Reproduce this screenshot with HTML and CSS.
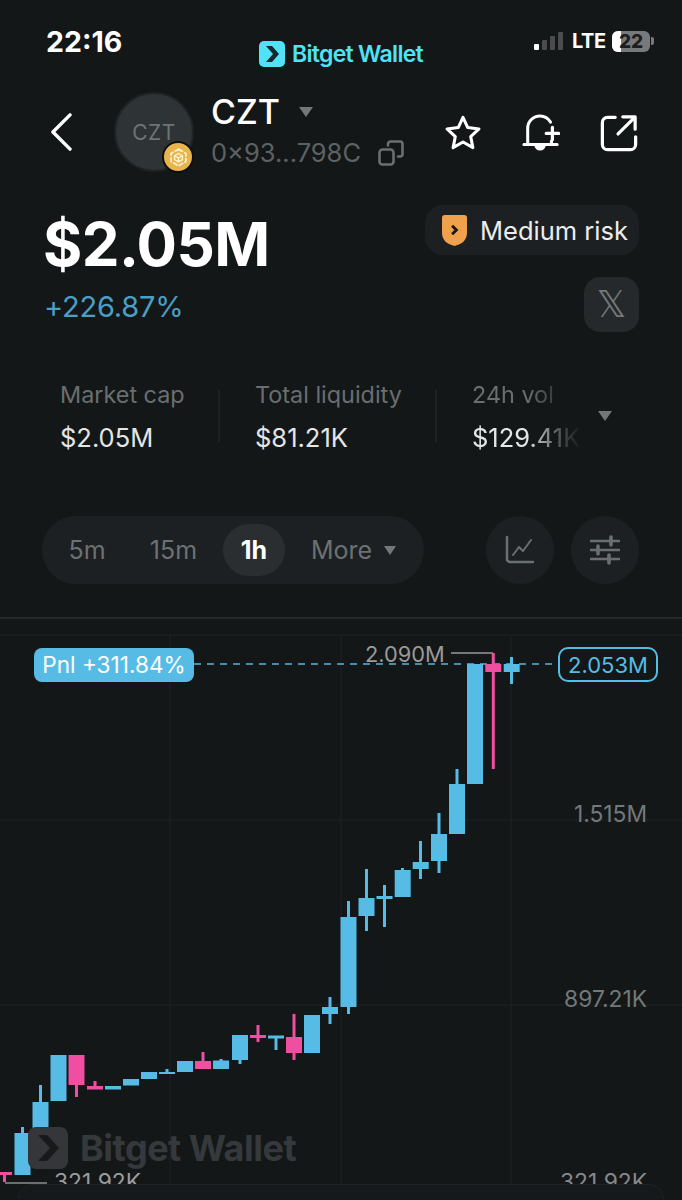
FILE: index.html
```html
<!DOCTYPE html>
<html lang="en">
<head>
<meta charset="utf-8">
<title>CZT</title>
<link rel="stylesheet" href="styles.css">
</head>
<body>
<div class="screen">
  <header class="status">
    <span class="clock">22:16</span>
    <div class="brand">
      <svg class="brand-mark" viewBox="0 0 26 26"><rect width="26" height="26" rx="5" fill="#4fe3f5"/><path d="M7 5h6l7 8-7 8H7l7-8z" fill="#12282c"/></svg>
      <span class="brand-name">Bitget Wallet</span>
    </div>
    <div class="status-right">
      <svg class="signal" viewBox="0 0 30 20"><rect x="0" y="13" width="5" height="6" rx="1" fill="#fff"/><rect x="8" y="9" width="5" height="10" rx="1" fill="#4a4c4d"/><rect x="16" y="5" width="5" height="14" rx="1" fill="#4a4c4d"/><rect x="24" y="1" width="5" height="18" rx="1" fill="#4a4c4d"/></svg>
      <span class="lte">LTE</span>
      <span class="battery"><span class="battery-level"></span><span class="battery-text">22</span></span>
      <span class="battery-tip"></span>
    </div>
  </header>

  <section class="token-row">
    <svg class="back" viewBox="0 0 24 40"><path d="M21 2 3 20l18 18" fill="none" stroke="#fff" stroke-width="3.600" stroke-linecap="round" stroke-linejoin="round"/></svg>
    <div class="avatar">
      <span>CZT</span>
      <span class="chain">
        <svg viewBox="0 0 24 24"><path d="M12 2.500 20.500 7.500v9L12 21.500 3.500 16.500v-9z" fill="none" stroke="#fff3d0" stroke-width="2" stroke-linejoin="round" stroke-dasharray="6 1.500"/><path d="M12 7.500l4.500 2.500v4.500L12 17l-4.500-2.500V10zM7.500 10l4.500 2.500 4.500-2.500M12 12.500V17" fill="none" stroke="#fff3d0" stroke-width="1.600" stroke-linejoin="round"/></svg>
      </span>
    </div>
    <div class="token-info">
      <div class="token-name">CZT<span class="caret caret-name"></span></div>
      <div class="token-address">0×93...798C
        <svg class="copy" viewBox="0 0 26 26"><rect x="1.500" y="9.500" width="14" height="15" rx="3" fill="none" stroke="#6a6f71" stroke-width="2.600"/><path d="M10 5.500V4a2.500 2.500 0 0 1 2.500-2.500h9.500A2.500 2.500 0 0 1 24.500 4v10a2.500 2.500 0 0 1-2.500 2.500h-2" fill="none" stroke="#6a6f71" stroke-width="2.600" stroke-linecap="round"/></svg>
      </div>
    </div>
    <div class="token-actions">
      <svg class="action" viewBox="0 0 40 40"><path d="M20 3.500l5 10.800 11.800 1.400-8.700 8 2.300 11.700L20 29.500 9.600 35.400l2.300-11.700-8.700-8L15 14.300z" fill="none" stroke="#fff" stroke-width="3.200" stroke-linejoin="round"/></svg>
      <svg class="action" viewBox="0 0 40 40"><path d="M6 32V15A13 13 0 0 1 19 2a13 13 0 0 1 11 6.500" fill="none" stroke="#fff" stroke-width="3.200" stroke-linecap="round"/><path d="M31 28.500V32M2 32h35" fill="none" stroke="#fff" stroke-width="3.200" stroke-linecap="round"/><path d="M13 33h12a6 5.500 0 0 1-12 0z" fill="#fff"/><path d="M32 14v13M25.500 20.500h13" fill="none" stroke="#fff" stroke-width="3.400" stroke-linecap="round"/></svg>
      <svg class="action" viewBox="0 0 40 40"><path d="M16 3.500H8A5.500 5.500 0 0 0 2.500 9v23A5.500 5.500 0 0 0 8 37.500h24a5.500 5.500 0 0 0 5.500-5.500v-8" fill="none" stroke="#fff" stroke-width="3.400" stroke-linecap="round"/><path d="M19 21 36 4M24 3h13v13" fill="none" stroke="#fff" stroke-width="3.400" stroke-linecap="round" stroke-linejoin="round"/></svg>
    </div>
  </section>

  <section class="price-block">
    <div class="price-main">
      <div class="price">$2.05M</div>
      <div class="change">+226.87%</div>
    </div>
    <div class="price-side">
      <div class="risk">
        <svg class="shield" viewBox="0 0 26 32"><path d="M3 0h20a3 3 0 0 1 3 3v15q0 11-13 14Q0 29 0 18V3a3 3 0 0 1 3-3z" fill="#f0a14b"/><path d="M10.500 11l4.500 4.500-4.500 4.500" fill="none" stroke="#17191a" stroke-width="3"/></svg>
        <span>Medium risk</span>
      </div>
      <div class="social"><span>𝕏</span></div>
    </div>
  </section>

  <section class="stats">
    <div class="stat stat-cap"><div class="stat-label">Market cap</div><div class="stat-value">$2.05M</div></div>
    <div class="stat-rule"></div>
    <div class="stat stat-liq"><div class="stat-label">Total liquidity</div><div class="stat-value">$81.21K</div></div>
    <div class="stat-rule"></div>
    <div class="stat stat-vol"><div class="stat-label">24h vol</div><div class="stat-value">$129.41K</div></div>
    <span class="caret caret-stats"></span>
  </section>

  <section class="controls">
    <div class="tabs">
      <span class="tab tab-5m">5m</span>
      <span class="tab tab-15m">15m</span>
      <span class="tab tab-active">1h</span>
      <span class="tab tab-more">More<span class="caret caret-more"></span></span>
    </div>
    <div class="tools">
      <button class="tool"><svg viewBox="0 0 30 30"><path d="M2 2v22a3 3 0 0 0 3 3h23" fill="none" stroke="#6a6f71" stroke-width="2.500" stroke-linecap="round"/><path d="M8 20l6-8 4 4 8-11" fill="none" stroke="#6a6f71" stroke-width="2" stroke-linecap="round" stroke-linejoin="round"/></svg></button>
      <button class="tool"><svg viewBox="0 0 30 30"><path d="M1 6h28M1 15h28M1 24h28" stroke="#6a6f71" stroke-width="2.600" stroke-linecap="round"/><path d="M21 2v8M8 11v8M19 20v8" stroke="#6a6f71" stroke-width="3.600" stroke-linecap="round"/></svg></button>
    </div>
  </section>

  <section class="chart">
    <svg class="plot" viewBox="0 619 682 566">
      <g class="grid">
        <path d="M170 635V1185M341 635V1185M511 635V1185M0 635H682M0 820H682M0 1005H682"/>
      </g>
      <path class="price-line" d="M194 664H560"/>
      <path class="high-line" d="M451 653H493"/>
      <path class="low-line" d="M5 1183H47"/>
      <g class="up">
        <rect x="21" y="1127" width="3" height="48"/><rect x="14.500" y="1133" width="16" height="42"/>
        <rect x="39" y="1085" width="3" height="48"/><rect x="32.500" y="1102" width="16" height="31"/>
        <rect x="50.500" y="1055" width="16" height="46"/>
        <rect x="105" y="1086" width="16" height="3.500"/>
        <rect x="123" y="1079" width="16" height="6.500"/>
        <rect x="141" y="1072" width="16" height="7"/>
        <rect x="165.500" y="1069" width="3" height="5"/><rect x="159" y="1072" width="16" height="2"/>
        <rect x="177" y="1061" width="16" height="11"/>
        <rect x="219.500" y="1059" width="3" height="10"/><rect x="213" y="1060.500" width="16" height="8.500"/>
        <rect x="238.500" y="1035" width="3" height="29"/><rect x="232" y="1035" width="16" height="25"/>
        <rect x="274.500" y="1036" width="3" height="14"/><rect x="268" y="1035.500" width="16" height="3"/>
        <rect x="304" y="1015" width="16" height="38"/>
        <rect x="328.500" y="997" width="3" height="27"/><rect x="322" y="1007" width="16" height="7"/>
        <rect x="347" y="901" width="3" height="113"/><rect x="340.500" y="917" width="16" height="90"/>
        <rect x="365" y="869" width="3" height="62"/><rect x="358.500" y="898" width="16" height="18"/>
        <rect x="383" y="885" width="3" height="42"/><rect x="376.500" y="896" width="16" height="3"/>
        <rect x="401" y="868" width="3" height="29"/><rect x="394.700" y="870" width="16" height="27"/>
        <rect x="419" y="841" width="3" height="38"/><rect x="412.700" y="862" width="16" height="7"/>
        <rect x="437.500" y="813" width="3" height="60"/><rect x="431" y="834" width="16" height="27"/>
        <rect x="455.500" y="769" width="3" height="65"/><rect x="449" y="784" width="16" height="50"/>
        <rect x="467" y="664" width="16" height="120"/>
        <rect x="510" y="657" width="3" height="27"/><rect x="503.700" y="664" width="16" height="8"/>
      </g>
      <g class="down">
        <rect x="3" y="1172" width="3" height="10"/><rect x="-4" y="1172" width="16" height="3"/>
        <rect x="75" y="1055" width="3" height="42"/><rect x="68.500" y="1055" width="16" height="30"/>
        <rect x="93.500" y="1081" width="3" height="8"/><rect x="87" y="1086" width="16" height="3.500"/>
        <rect x="201.500" y="1052" width="3" height="17"/><rect x="195" y="1061" width="16" height="8"/>
        <rect x="256.500" y="1025" width="3" height="17"/><rect x="250" y="1035" width="16" height="3"/>
        <rect x="292.500" y="1014" width="3" height="46"/><rect x="286" y="1037" width="16" height="16"/>
        <rect x="491.800" y="653" width="3" height="116"/><rect x="485.300" y="664" width="16" height="8"/>
      </g>
    </svg>

    <div class="watermark">
      <svg class="watermark-mark" viewBox="0 0 40 42"><rect width="40" height="42" rx="8" fill="#343639"/><path d="M10 8h9l12 13-12 13h-9l12-13z" fill="#17191b"/></svg>
      <span>Bitget Wallet</span>
    </div>

    <span class="pnl">Pnl +311.84%</span>
    <span class="last-price">2.053M</span>
    <span class="axis axis-high">2.090M</span>
    <span class="axis axis-1515">1.515M</span>
    <span class="axis axis-897">897.21K</span>
    <span class="axis axis-321r">321.92K</span>
    <span class="axis axis-321l">321.92K</span>
  </section>

  <div class="sheet"></div>
</div>
</body>
</html>
```

FILE: styles.css
```css
* { box-sizing: border-box; }

html, body {
  margin: 0;
  padding: 0;
  background: #141718;
}

.screen {
  width: 682px;
  height: 1200px;
  overflow: hidden;
  font-family: Inter, "Liberation Sans", sans-serif;
  color: #fff;
  background: #141718;
}

/* status bar */
.status {
  position: relative;
  height: 92px;
  padding: 26px 28px 0 46px;
  display: flex;
  justify-content: space-between;
  align-items: flex-start;
}
.clock {
  font-size: 28.500px;
  line-height: 31px;
  font-weight: 700;
}
.brand {
  position: absolute;
  left: 259px;
  top: 41px;
  display: flex;
  align-items: center;
  gap: 7px;
}
.brand-mark { width: 26px; height: 26px; }
.brand-name {
  font-size: 23px;
  line-height: 26px;
  font-weight: 600;
  letter-spacing: -0.7px;
  color: #4fe3f5;
}
.status-right {
  display: flex;
  align-items: center;
  margin-top: 4px;
  height: 22px;
}
.signal { width: 30px; height: 20px; margin-right: 8px; }
.lte {
  font-size: 20px;
  font-weight: 700;
  width: 40px;
  letter-spacing: -0.4px;
}
.battery {
  position: relative;
  width: 38px;
  height: 21px;
  border-radius: 6px;
  background: #77797a;
  overflow: hidden;
  display: block;
}
.battery-level {
  position: absolute;
  left: 0;
  top: 0;
  bottom: 0;
  width: 9px;
  background: #fff;
}
.battery-text {
  position: absolute;
  inset: 0;
  text-align: center;
  font-size: 19px;
  line-height: 21px;
  font-weight: 800;
  color: #1c1d1e;
}
.battery-tip {
  width: 3px;
  height: 8px;
  margin-left: 1px;
  border-radius: 0 2px 2px 0;
  background: #77797a;
}

/* token header */
.token-row {
  height: 80px;
  padding-left: 50px;
  display: flex;
  align-items: center;
}
.back { width: 23px; height: 38px; margin-right: 41px; }
.avatar {
  position: relative;
  width: 80px;
  height: 80px;
  margin-right: 17px;
  border-radius: 50%;
  background: #2e3335;
  border: 2px solid #1f2325;
  color: #6f7476;
  font-size: 21px;
  letter-spacing: 0.5px;
  display: flex;
  align-items: center;
  justify-content: center;
}
.chain {
  position: absolute;
  right: -2px;
  bottom: -3px;
  width: 32px;
  height: 32px;
  border-radius: 50%;
  background: #e9b44c;
  border: 2px solid #0d0e0f;
  display: flex;
  align-items: center;
  justify-content: center;
}
.chain svg { width: 21px; height: 21px; }
.token-info { width: 207px; margin-top: -1px; }
.token-name {
  display: flex;
  align-items: center;
  margin-top: -3px;
  font-size: 34px;
  line-height: 40px;
  font-weight: 500;
}
.token-address {
  display: flex;
  align-items: center;
  margin-top: 6px;
  font-size: 25.500px;
  line-height: 30px;
  color: #5d6264;
  white-space: nowrap;
}
.copy { width: 26px; height: 26px; margin-left: 17px; }
.caret {
  display: inline-block;
  width: 0;
  height: 0;
  border-left: 7px solid transparent;
  border-right: 7px solid transparent;
  border-top: 10px solid #72777a;
}
.caret-name { margin: 0 0 0 19px; }
.token-actions {
  display: flex;
  align-items: center;
  gap: 40px;
  margin-left: 26px;
  margin-top: 2px;
}
.action { width: 38px; height: 38px; }

/* price block */
.price-block {
  height: 195px;
  padding: 33px 43px 0 43px;
  display: flex;
  justify-content: space-between;
  align-items: flex-start;
}
.price {
  margin-top: 7px;
  font-size: 60px;
  line-height: 64px;
  font-weight: 700;
  letter-spacing: -0.6px;
}
.change {
  margin-top: 15px;
  margin-left: 1px;
  font-size: 29px;
  line-height: 32px;
  color: #4a9fc6;
  letter-spacing: -0.2px;
}
.price-side {
  display: flex;
  flex-direction: column;
  align-items: flex-end;
  gap: 22px;
}
.risk {
  width: 214px;
  height: 50px;
  padding-left: 17px;
  display: flex;
  align-items: center;
  gap: 13px;
  border-radius: 18px;
  background: #1c2022;
  font-size: 25.500px;
  color: #eceded;
}
.shield { width: 25px; height: 31px; }
.social {
  width: 55px;
  height: 55px;
  border-radius: 16px;
  background: #25292b;
  display: flex;
  align-items: center;
  justify-content: center;
  font-family: "DejaVu Sans", sans-serif;
  font-size: 37px;
  color: #73787a;
}

/* stats strip */
.stats {
  position: relative;
  height: 149px;
  padding: 13px 0 0 60px;
  display: flex;
  align-items: flex-start;
}
.stat-label {
  font-size: 23.400px;
  line-height: 30px;
  color: #696e70;
  white-space: nowrap;
}
.stat-value {
  margin-top: 13px;
  font-size: 25.500px;
  line-height: 30px;
  color: #e4e5e5;
  white-space: nowrap;
}
.stat-cap { width: 158px; }
.stat-liq { width: 180px; }
.stat-vol {
  width: 110px;
  -webkit-mask-image: linear-gradient(90deg, #000 50%, rgba(0, 0, 0, 0.25) 82%, transparent 100%);
  mask-image: linear-gradient(90deg, #000 50%, rgba(0, 0, 0, 0.25) 82%, transparent 100%);
  overflow: hidden;
}
.stat-rule {
  width: 2px;
  height: 52px;
  margin: 10px 35px 0 0;
  background: #1e2224;
}
.caret-stats {
  position: absolute;
  left: 598px;
  top: 44px;
}

/* interval controls */
.controls {
  height: 103px;
  padding: 0 43px 0 42px;
  display: flex;
  justify-content: space-between;
  align-items: flex-start;
  border-bottom: 2px solid #25282a;
}
.tabs {
  position: relative;
  width: 382px;
  height: 68px;
  border-radius: 34px;
  background: #1c2022;
  display: flex;
  align-items: center;
  font-size: 25px;
  color: #6c7173;
}
.tab { display: flex; align-items: center; justify-content: center; }
.tab-5m { margin-left: 27px; width: 36px; }
.tab-15m { margin-left: 44px; width: 49px; }
.tab-active {
  margin-left: 25px;
  width: 62px;
  height: 52px;
  border-radius: 26px;
  background: #2a2e30;
  color: #fff;
  font-weight: 700;
}
.tab-more { margin-left: 26px; }
.caret-more {
  margin-left: 12px;
  border-left-width: 6.500px;
  border-right-width: 6.500px;
  border-top-width: 9px;
}
.tools { display: flex; gap: 17px; }
.tool {
  width: 68px;
  height: 68px;
  padding: 0;
  border: 0;
  border-radius: 50%;
  background: #1c2022;
  display: flex;
  align-items: center;
  justify-content: center;
}
.tool svg { width: 30px; height: 30px; }

.chart {
  position: relative;
  height: 565px;
  overflow: hidden;
}
.plot {
  position: absolute;
  left: 0;
  top: 0;
  width: 682px;
  height: 566px;
}
.grid path { stroke: #1b1f20; stroke-width: 1.500; fill: none; }
.price-line {
  stroke: #5bb4d6;
  stroke-width: 1.500;
  stroke-dasharray: 7 6;
  fill: none;
}
.high-line { stroke: #999; stroke-width: 1.500; fill: none; }
.low-line { stroke: #8a8d8e; stroke-width: 1.500; fill: none; }
.up rect { fill: #56bce6; }
.down rect { fill: #ee4fa0; }

.pnl {
  position: absolute;
  left: 34px;
  top: 29px;
  width: 160px;
  height: 34px;
  border-radius: 8px;
  background: #56bce6;
  font-size: 22.600px;
  line-height: 34px;
  text-align: center;
  color: #fff;
  white-space: nowrap;
}
.last-price {
  position: absolute;
  left: 558px;
  top: 28px;
  width: 100px;
  height: 35px;
  border: 2px solid #56bce6;
  border-radius: 10px;
  background: #141718;
  font-size: 22px;
  line-height: 32px;
  text-align: center;
  color: #56bce6;
}
.axis {
  position: absolute;
  font-size: 22.800px;
  line-height: 26px;
  color: #73787a;
  white-space: nowrap;
}
.axis-high { left: 365px; top: 22px; font-size: 21.800px; color: #9a9a9a; }
.axis-1515 { right: 35px; top: 182px; }
.axis-897 { right: 35px; top: 367px; }
.axis-321r { right: 35px; top: 550px; color: #85898b; }
.axis-321l { left: 54px; top: 550px; color: #9a9c9d; }
.watermark {
  position: absolute;
  left: 28px;
  top: 508px;
  display: flex;
  align-items: center;
  gap: 12px;
  font-size: 36px;
  line-height: 42px;
  font-weight: 700;
  letter-spacing: -0.5px;
  color: #36393b;
  white-space: nowrap;
}
.watermark-mark { width: 40px; height: 42px; }

/* foot of the screen: the next sheet peeking in */
.sheet {
  height: 15px;
  margin: 0 18px;
  border: 1px solid #1f2325;
  border-bottom: 0;
  border-radius: 26px 26px 0 0;
  background: #16191b;
}
```
